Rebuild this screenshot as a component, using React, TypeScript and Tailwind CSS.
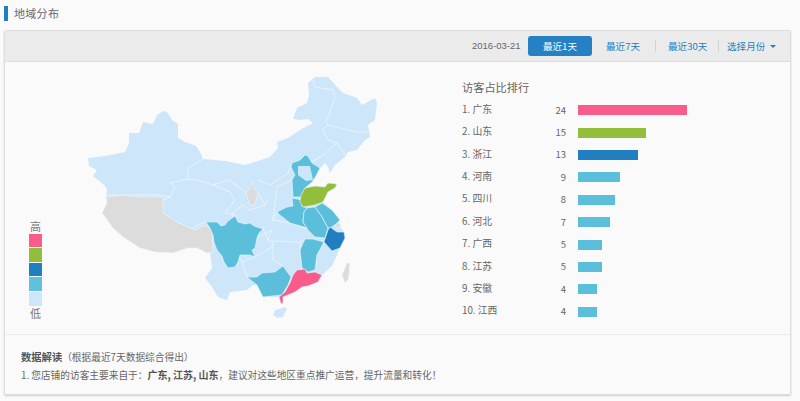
const base = "88,158 96,157 104,156 110,155 125,152 129,143 129,133 139,133 143,122 153,124 157,115 163,111 167,112 172,120 178,124 178,138 185,142 196,146 200,152 203,159 215,160 225,161 235,163 245,165 258,161 270,157 278,148 277,142 288,138 300,130 313,123 308,119 300,120 293,119 297,108 307,103 309,95 308,83 315,77 328,77 337,87 343,93 357,98 362,105 375,98 377,103 375,120 368,125 370,137 365,140 357,150 348,152 345,157 335,165 330,173 328,167 325,163 320,168 316,176 312,182 305,188 315,186 325,187 328,183 337,184 335,188 328,192 323,202 332,210 340,220 337,223 344,232 345,238 340,248 337,255 332,266 322,275 318,282 308,286 302,287 295,292 283,297 270,297 263,297 257,285 253,285 247,290 230,292 227,300 218,297 212,287 205,278 212,268 210,252 213,252 212,228 205,225 195,230 177,222 163,213 163,200 157,197 123,197 106,197 107,190 105,186 98,180 93,176 97,170 89,166";
const provinces: [string, string][] = [
  ["#dcdcdc", "106,197 123,195 140,197 163,197 163,213 177,222 195,230 205,225 212,228 213,252 207,253 197,248 188,248 173,253 155,252 140,248 123,237 113,228 102,213 107,203"],
  ["#dcdcdc", "253,182 255,190 258,193 255,205 250,205 246,193 250,188"],
  ["#dcdcdc", "347,263 350,263 349,275 348,280 345,283 342,275"],
  ["#dcdcdc", "337,222 341,225 339,228 335,226"],
  ["#cde6fa", "285,307 287,309 283,317 277,318 273,315 275,310"],
  ["#5bbfdc", "206,222 217,222 221,226 225,225 228,221 235,216 238,222 245,224 250,223 254,226 263,229 259,233 257,238 255,248 252,250 255,257 250,255 245,255 240,255 238,262 235,267 228,268 224,262 222,256 217,250 214,242 213,235 210,228"],
  ["#5bbfdc", "247,277 257,277 262,273 275,272 283,266 291,277 288,285 282,295 272,296 263,297 257,285"],
  ["#5bbfdc", "292,163 300,160 305,155 308,156 312,163 320,168 316,176 312,182 305,188 301,197 293,197 292,180 295,175 291,167"],
  ["#5bbfdc", "292,198 302,200 302,206 307,208 304,212 303,222 307,228 297,225 290,223 280,215 277,212 287,207 293,206"],
  ["#5bbfdc", "315,207 322,203 332,210 340,220 337,223 332,227 328,228 325,223 322,217"],
  ["#5bbfdc", "304,212 307,208 315,207 322,217 325,223 328,228 325,238 315,237 308,230 303,222"],
  ["#5bbfdc", "305,239 313,239 324,242 317,255 315,270 308,272 302,268 300,250"],
  ["#1f7fc1", "330,227 337,232 344,232 345,238 340,248 332,251 324,242 328,230"],
  ["#93be3c", "301,195 305,188 315,186 325,187 328,183 337,184 335,188 328,192 323,202 315,205 303,207 300,202"],
  ["#f85c8a", "297,270 305,269 307,273 315,272 322,275 318,282 308,286 302,287 295,292 283,297 283,303 281,304 279,297 285,292 290,283 293,275"],
];
const holes = "298,166 310,166 313,180 306,181 298,175";
const lines = [
  "203,159 188,168 188,179 170,183 175,187 170,197 163,200",
  "105,195 123,195 157,195 170,197",
  "188,179 197,180 213,185 230,192 235,200 225,213 237,215",
  "193,228 205,222",
  "313,80 315,87 333,90 335,97 328,117 325,122 328,125 323,130 328,140 337,143 347,157",
  "328,125 340,128 357,132 368,132",
  "337,143 323,155 310,163 300,160",
  "292,163 288,173 270,185 258,180",
  "292,180 277,187 273,220 277,212",
  "267,200 265,205 250,210 243,205 233,212 233,217",
  "272,220 290,223 310,230",
  "268,241 300,242 305,239",
  "263,228 268,240 272,230 257,238",
  "273,243 273,260 283,266",
  "242,262 247,277",
  "255,257 272,247 273,243",
  "238,255 242,262 255,257",
  "315,270 317,255 324,242",
  "302,268 300,250 300,242",
  "246,193 238,186 228,180 213,185",
  "258,193 265,205",
];

const rows = [
  ["1.", "广东", 24, 109, "bg-[#f85c8a]"],
  ["2.", "山东", 15, 68, "bg-[#93be3c]"],
  ["3.", "浙江", 13, 60, "bg-[#1f7fc1]"],
  ["4.", "河南", 9, 42, "bg-[#5bbfdc]"],
  ["5.", "四川", 8, 37, "bg-[#5bbfdc]"],
  ["6.", "河北", 7, 32, "bg-[#5bbfdc]"],
  ["7.", "广西", 5, 24, "bg-[#5bbfdc]"],
  ["8.", "江苏", 5, 24, "bg-[#5bbfdc]"],
  ["9.", "安徽", 4, 19, "bg-[#5bbfdc]"],
  ["10.", "江西", 4, 19, "bg-[#5bbfdc]"],
] as const;

const font = "font-['Noto_Sans_CJK_SC','Liberation_Sans',sans-serif]";

export default function App() {
  return (
    <div className={`w-[800px] h-[401px] overflow-hidden bg-[#fafafa] text-[#666] ${font}`}>
      <div className="h-[30px] pt-[6px] pl-[4px] flex items-start">
        <div className="w-[4px] h-[15px] bg-[#1f7fc1]" />
        <div className="ml-[6px] text-[11px] leading-[15px] tracking-[0.3px] text-[#667]">地域分布</div>
      </div>
      <div className="ml-[4px] w-[787px] h-[365px] border border-[#dedede] rounded-[2px] shadow-[0_1px_2px_rgba(0,0,0,0.18)]">
        <div className="h-[31px] bg-[#ebebeb] border-b border-[#dddddd] flex items-center pl-[467px] text-[9.6px] text-[#1f7fc1]">
          <span className="w-[48px] text-[9.5px] text-[#666] font-['Liberation_Sans',sans-serif] whitespace-nowrap">2016-03-21</span>
          <span className="ml-[8px] w-[64px] h-[20px] rounded-[3px] bg-[#2581c4] text-white flex items-center justify-center">最近1天</span>
          <span className="ml-[14px] w-[36px] whitespace-nowrap">最近7天</span>
          <span className="ml-[13px] w-px h-[12px] bg-[#d4d4d4]" />
          <span className="ml-[12px] w-[40px] whitespace-nowrap">最近30天</span>
          <span className="ml-[10px] w-px h-[12px] bg-[#d4d4d4]" />
          <span className="ml-[8px] w-[43px] whitespace-nowrap">选择月份</span>
          <span className="w-0 h-0 border-x-[3px] border-x-transparent border-t-[3px] border-t-[#1f7fc1]" />
        </div>
        <div className="h-[273px] flex border-b border-[#ebebeb]">
          <div className="ml-[24px] w-[13px] pt-[157px] flex flex-col items-center text-[11px] leading-[14px] text-[#777]">
            <span>高</span>
            <span className="w-[13px] h-[13px] mt-[1px] bg-[#f85c8a]" />
            <span className="w-[13px] h-[14px] mt-[1px] bg-[#93be3c]" />
            <span className="w-[13px] h-[13px] mt-[1px] bg-[#1f7fc1]" />
            <span className="w-[13px] h-[14px] mt-[1px] bg-[#5fc1dd]" />
            <span className="w-[13px] h-[14px] mt-[1px] bg-[#cde6fa]" />
            <span className="leading-[12px] mt-[1px]">低</span>
          </div>
          <svg className="ml-[28px] shrink-0" width="370" height="273" viewBox="70 62 370 273">
            <polygon points={base} fill="#cde6fa" />
            {lines.map((l, i) => (
              <polyline key={i} points={l} fill="none" stroke="#eef6fc" strokeWidth="0.8" strokeLinejoin="round" />
            ))}
            {provinces.map(([c, p], i) => (
              <polygon key={i} points={p} fill={c} stroke="#eef6fc" strokeWidth="0.6" strokeLinejoin="round" />
            ))}
            <polygon points={holes} fill="#cde6fa" />
          </svg>
          <div className="ml-[22px] flex-1">
            <div className="mt-[15px] h-[20px] text-[11.2px] leading-[20px] text-[#666]">访客占比排行</div>
            <div className="mt-[2px]">
              {rows.map(([rank, name, n, w, c]) => (
                <div key={rank} className="h-[22.4px] flex items-center text-[9.8px]">
                  <span className="w-[90px] whitespace-nowrap pb-[2px]">
                    {rank} {name}
                  </span>
                  <span className="w-[14px] text-right text-[9.5px] pb-[1px]">{n}</span>
                  <span className={`ml-[12px] h-[10px] ${c}`} style={{ width: w }} />
                </div>
              ))}
            </div>
          </div>
        </div>
        <div className="pl-[16px] pt-[13px] text-[9.7px] leading-[18px] text-[#666]">
          <div className="whitespace-nowrap">
            <b className="text-[10.3px] text-[#555]">数据解读</b>（根据最近7天数据综合得出）
          </div>
          <div className="whitespace-nowrap">
            1. 您店铺的访客主要来自于：<b className="text-[10px] text-[#555]">广东, 江苏, 山东</b>，建议对这些地区重点推广运营，提升流量和转化！
          </div>
        </div>
      </div>
    </div>
  );
}
